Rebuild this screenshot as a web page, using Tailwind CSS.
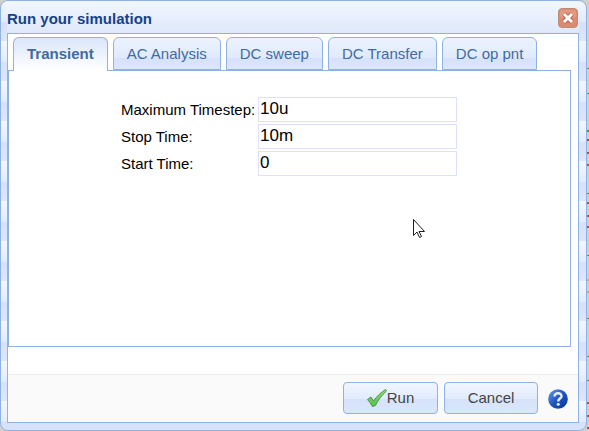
<!DOCTYPE html>
<html lang="en">
<head>
<meta charset="utf-8">
<title>Run your simulation</title>
<script src="https://cdn.jsdelivr.net/npm/@tailwindcss/browser@4"></script>
</head>
<body class="relative flex min-h-screen bg-[#d0d0d0] pr-0.5 font-['Liberation_Sans',Arial,sans-serif] text-[15px]">
<svg class="absolute top-0 right-0 h-[431px] w-[2px]" viewBox="0 0 2 431" aria-hidden="true">
  <path stroke="#3d9a4e" d="M0 68.500h2M0 93.500h2M0 130.500h2M0 131.500h2M0 193.500h2M0 255.500h2M0 318.500h2M0 356.500h2M0 380.500h2"/>
  <path stroke="#b8484e" stroke-width="2" d="M0 140h2M0 153h2M0 165h2M0 203h2M0 216h2M0 227h2M0 403h2M0 416h2M0 428h2"/>
  <path stroke="#e0a090" stroke-width="2" d="M0 280h2M0 292h2"/>
</svg>
<section role="dialog" aria-labelledby="title" class="flex grow flex-col rounded-lg border border-[#8db2e3] bg-[linear-gradient(#f2f7ff_0%,#e2ebfc_52%,#d5e1fa_53%,#dde7fb_100%)] bg-size-[100%_40px] pr-[7px] pb-[7px] pl-1.5">
  <header class="flex h-8 items-center justify-between bg-linear-to-b from-[#f2f7ff] to-[#dfe8fb]">
    <h1 id="title" class="pt-1 font-bold text-[#15428b]">Run your simulation</h1>
    <button aria-label="Close" class="mt-0.5 mr-px">
      <svg class="size-5" viewBox="0 0 20 20"><rect x=".5" y=".5" width="19" height="19" rx="3.500" fill="#dc8b70" stroke="#b98c79"/><rect x="2" y="2" width="16" height="8" rx="2" fill="#e39a7e"/><path d="M6 6l8 8M14 6l-8 8" stroke="#b5654c" stroke-width="5"/><path d="M6 6l8 8M14 6l-8 8" stroke="#fff" stroke-width="3"/></svg>
    </button>
  </header>
  <main class="flex grow flex-col border border-[#8db2e3] bg-white">
    <nav role="tablist" class="flex gap-[5px] px-[5px] pt-[3px] text-[#416aa3]">
      <button role="tab" aria-selected="true" class="relative -mb-px h-[34px] rounded-t-md border border-b-0 border-[#8db2e3] bg-linear-to-b from-[#dbe6fa] to-white px-[13px] font-bold">Transient</button>
      <button role="tab" class="h-[33px] rounded-t-md border border-[#8db2e3] bg-[linear-gradient(#ecf3fe,#e0eafc_65%,#d6e2fa_66%,#dce6fb)] px-[13px] pt-0.5">AC Analysis</button>
      <button role="tab" class="h-[33px] rounded-t-md border border-[#8db2e3] bg-[linear-gradient(#ecf3fe,#e0eafc_65%,#d6e2fa_66%,#dce6fb)] px-[13px] pt-0.5">DC sweep</button>
      <button role="tab" class="h-[33px] rounded-t-md border border-[#8db2e3] bg-[linear-gradient(#ecf3fe,#e0eafc_65%,#d6e2fa_66%,#dce6fb)] px-[13px] pt-0.5">DC Transfer</button>
      <button role="tab" class="h-[33px] rounded-t-md border border-[#8db2e3] bg-[linear-gradient(#ecf3fe,#e0eafc_65%,#d6e2fa_66%,#dce6fb)] px-[13px] pt-0.5">DC op pnt</button>
    </nav>
    <form class="mr-[7px] mb-[27px] grow border border-[#8db2e3] bg-white pt-[26px] pl-28 text-black">
      <div class="grid w-[336px] grid-cols-[137px_1fr] items-center gap-y-0.5">
        <label for="step" class="pt-0.5">Maximum Timestep:</label><input id="step" value="10u" class="h-[25px] w-full min-w-0 border border-[#dfdfff] px-px pb-0.5 text-[17px]">
        <label for="stop" class="pt-0.5">Stop Time:</label><input id="stop" value="10m" class="h-[25px] w-full min-w-0 border border-[#dfdfff] px-px pb-0.5 text-[17px]">
        <label for="start" class="pt-0.5">Start Time:</label><input id="start" value="0" class="h-[25px] w-full min-w-0 border border-[#dfdfff] px-px pb-0.5 text-[17px]">
      </div>
    </form>
    <footer class="flex h-12 items-center justify-end gap-1.5 border-t border-[#ebebeb] bg-[#fafafa] pr-2.5 pb-0.5 text-[#444]">
      <button class="flex h-8 w-[95px] items-center justify-center rounded border border-[#8db2e3] bg-[linear-gradient(#f0f5ff,#e2ebfd_52%,#d6e2fa_54%,#dce7fb)]">
        <svg class="size-5" viewBox="0 0 20 20" aria-hidden="true"><defs><linearGradient id="tick" x2="0" y2="1"><stop stop-color="#8be070"/><stop offset="1" stop-color="#55c044"/></linearGradient></defs><path d="M.5 11.500L4 9l2.500 4C10 8 14.500 4 18.500 1.500l1 1.500C14.500 7.500 11 12 8.500 17.500L5.500 18.500C4 16 2.500 13.500.5 11.500z" fill="url(#tick)" stroke="#4d9350"/></svg><span class="pt-0.5">Run</span></button>
      <button class="h-8 w-[94px] rounded border border-[#8db2e3] bg-[linear-gradient(#f0f5ff,#e2ebfd_52%,#d6e2fa_54%,#dce7fb)] pt-0.5">Cancel</button>
      <button aria-label="Help" class="mt-0.5 ml-1">
        <svg class="size-5" viewBox="0 0 20 20"><defs><linearGradient id="g" x2="1" y2="1"><stop stop-color="#6a9de8"/><stop offset=".5" stop-color="#1f55bd"/><stop offset="1" stop-color="#0b2f9a"/></linearGradient></defs><circle cx="10" cy="10" r="9.800" fill="url(#g)"/><path d="M6.500 7.500C6.500 2.800 14 3.500 13.500 7.500c-.4 2.200-3.300 2-3.300 4.900" fill="none" stroke="#e8f0ff" stroke-width="2.400"/><circle cx="10.200" cy="15.300" r="1.500" fill="#e8f0ff"/></svg>
      </button>
    </footer>
  </main>
</section>
<svg class="absolute top-[219px] left-[413px] h-5 w-3" viewBox="0 0 12 20" aria-hidden="true"><path d="M.5 .5v16l3.500-3.500 2.500 5.500 2-1-2.500-5h5.500z" fill="#fff" stroke="#1c1c28"/></svg>
</body>
</html>
